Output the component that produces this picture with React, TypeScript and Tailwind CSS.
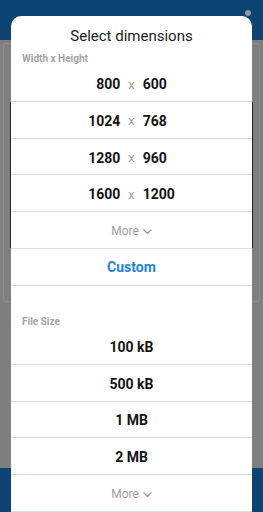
import React from "react";

const Chevron = () => (
  <svg width="9" height="6" viewBox="0 0 9 6" className="ml-[4px] mt-[1px]" fill="none">
    <path d="M1 1l3.5 3.5L8 1" stroke="#9e9e9e" strokeWidth="1.4" strokeLinecap="round" strokeLinejoin="round" />
  </svg>
);

const DimRow = ({ w, h }: { w: string; h: string }) => (
  <div className="h-[37px] border-b border-[#cfe2ef] grid grid-cols-[1fr_auto_1fr] items-center pt-[3px]">
    <span className="text-right text-[14px] font-bold text-[#141414]">{w}</span>
    <span className="mx-[8px] text-[13px] text-[#a0a0a0]">x</span>
    <span className="text-left text-[14px] font-bold text-[#141414]">{h}</span>
  </div>
);

const SizeRow = ({ t }: { t: string }) => (
  <div className="h-[37px] border-b border-[#cfe2ef] flex items-center justify-center pt-[3px] text-[14px] font-bold text-[#141414]">
    {t}
  </div>
);

const More = () => (
  <div className="h-[37px] border-b border-[#cfe2ef] flex items-center justify-center pt-[2px] text-[12px] text-[#9e9e9e]">
    More
    <Chevron />
  </div>
);

export default function App() {
  return (
    <div
      className="relative w-[263px] h-[512px] overflow-hidden bg-[#7f7f7f] flex flex-col"
      style={{ fontFamily: "Roboto, 'Noto Sans', sans-serif" }}
    >
      {/* background app (dimmed) */}
      <div className="h-[40px] bg-[#0e4474] flex items-start justify-end pr-[12px] pt-[10px] shrink-0">
        <div className="w-[6px] h-[6px] rounded-full bg-[#8d99a6]" />
      </div>
      <div className="flex-1 px-[3px] pt-[3px]">
        <div className="h-[259px] bg-[#7f7f7f] border border-[#8a8a8a] rounded-[2px] px-[6px] pt-[58px]">
          <div className="h-[146px] bg-[#1d2430]" />
        </div>
      </div>
      <div className="h-[44px] bg-[#0e4474] shrink-0" />

      {/* dialog */}
      <div className="absolute left-[11px] top-[16px] w-[241px] bottom-0 bg-white rounded-t-[10px] flex flex-col">
        <div className="pt-[10px] leading-[20px] text-center text-[15px] text-[#1c1c1c]">Select dimensions</div>
        <div className="mt-[7px] leading-[12px] px-[11px] text-[10px] font-bold text-[#a3a3a3]">Width x Height</div>
        <DimRow w="800" h="600" />
        <DimRow w="1024" h="768" />
        <DimRow w="1280" h="960" />
        <DimRow w="1600" h="1200" />
        <More />
        <div className="h-[37px] border-b border-[#cfe2ef] flex items-center justify-center pt-[2px] text-[14px] font-bold text-[#1e83df]">
          Custom
        </div>
        <div className="mt-[30px] leading-[12px] px-[11px] text-[10px] font-bold text-[#a3a3a3]">File Size</div>
        <SizeRow t="100 kB" />
        <SizeRow t="500 kB" />
        <SizeRow t="1 MB" />
        <SizeRow t="2 MB" />
        <More />
      </div>
    </div>
  );
}
